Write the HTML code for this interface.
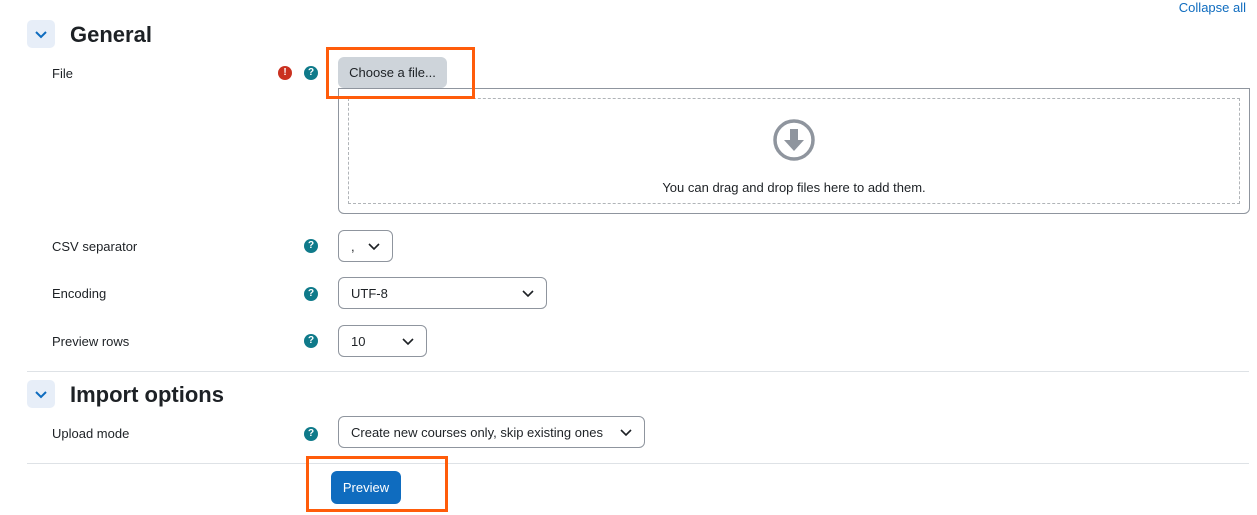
<!DOCTYPE html>
<html><head><meta charset="utf-8"><style>
body{margin:0;width:1257px;height:515px;background:#fff;font-family:"Liberation Sans",sans-serif;color:#1d2125;position:relative;overflow:hidden}
.a{position:absolute}
.lbl{position:absolute;left:52px;font-size:13px;line-height:16px}
.chev{position:absolute;left:27px;width:28px;height:28px;background:#e7eef8;border-radius:5px}
.h{position:absolute;left:70px;font-size:22px;font-weight:bold;line-height:28px;color:#1d2125}
.help{position:absolute;left:304px;width:14px;height:14px;border-radius:50%;background:#0f7a8a;color:#fff;font-size:10px;font-weight:bold;text-align:center;line-height:14px}
.sel{position:absolute;left:338px;border:1px solid #8f959e;border-radius:6px;font-size:13px;line-height:32px;box-sizing:border-box;height:32px;padding-left:12px}
.sel svg{position:absolute;right:12px;top:12px}
.hr{position:absolute;left:27px;width:1222px;height:1px;background:#dee2e6}
.or{position:absolute;border:3px solid #ff5c0a;box-sizing:border-box}
</style></head><body>
<div class="a" style="right:11px;top:0;font-size:13px;color:#0f6cbf">Collapse all</div>

<div class="chev" style="top:20px"><svg width="28" height="28"><path d="M9 12l5 5 5-5" fill="none" stroke="#0f6cbf" stroke-width="2"/></svg></div>
<div class="h" style="top:21px">General</div>

<div class="lbl" style="top:66px">File</div>
<div class="a" style="left:278px;top:66px;width:14px;height:14px;border-radius:50%;background:#ca3120;color:#fff;font-size:10px;font-weight:bold;text-align:center;line-height:14px">!</div>
<div class="help" style="top:66px">?</div>
<div class="a" style="left:338px;top:57px;width:109px;height:31px;background:#ced4da;border-radius:6px;font-size:13px;line-height:32px;text-align:center">Choose a file...</div>
<div class="a" style="left:338px;top:88px;width:912px;height:126px;border:1px solid #8f959e;border-radius:0 0 6px 6px;box-sizing:border-box"></div>
<div class="a" style="left:348px;top:98px;width:892px;height:106px;border:1px dashed #b0b4b8;box-sizing:border-box"></div>
<svg class="a" style="left:772px;top:118px" width="44" height="44"><circle cx="22" cy="22" r="19" fill="none" stroke="#8f959e" stroke-width="3.5"/><path d="M18 11h8v11h6l-10 11-10-11h6z" fill="#8f959e"/></svg>
<div class="a" style="left:338px;width:912px;top:180px;text-align:center;font-size:13px">You can drag and drop files here to add them.</div>
<div class="or" style="left:326px;top:47px;width:149px;height:52px"></div>

<div class="lbl" style="top:239px">CSV separator</div>
<div class="help" style="top:239px">?</div>
<div class="sel" style="top:230px;width:55px">,<svg width="12" height="8"><path d="M1 1l5 5 5-5" fill="none" stroke="#1d2125" stroke-width="1.6"/></svg></div>

<div class="lbl" style="top:286px">Encoding</div>
<div class="help" style="top:287px">?</div>
<div class="sel" style="top:277px;width:209px">UTF-8<svg width="12" height="8"><path d="M1 1l5 5 5-5" fill="none" stroke="#1d2125" stroke-width="1.6"/></svg></div>

<div class="lbl" style="top:334px">Preview rows</div>
<div class="help" style="top:334px">?</div>
<div class="sel" style="top:325px;width:89px">10<svg width="12" height="8"><path d="M1 1l5 5 5-5" fill="none" stroke="#1d2125" stroke-width="1.6"/></svg></div>

<div class="hr" style="top:371px"></div>
<div class="chev" style="top:380px"><svg width="28" height="28"><path d="M9 12l5 5 5-5" fill="none" stroke="#0f6cbf" stroke-width="2"/></svg></div>
<div class="h" style="top:381px">Import options</div>

<div class="lbl" style="top:426px">Upload mode</div>
<div class="help" style="top:427px">?</div>
<div class="sel" style="top:416px;width:307px">Create new courses only, skip existing ones<svg width="12" height="8"><path d="M1 1l5 5 5-5" fill="none" stroke="#1d2125" stroke-width="1.6"/></svg></div>

<div class="hr" style="top:463px"></div>
<div class="a" style="left:331px;top:471px;width:70px;height:33px;background:#0f6cbf;border-radius:6px;color:#fff;font-size:13px;line-height:34px;text-align:center">Preview</div>
<div class="or" style="left:306px;top:456px;width:142px;height:56px"></div>
</body></html>
